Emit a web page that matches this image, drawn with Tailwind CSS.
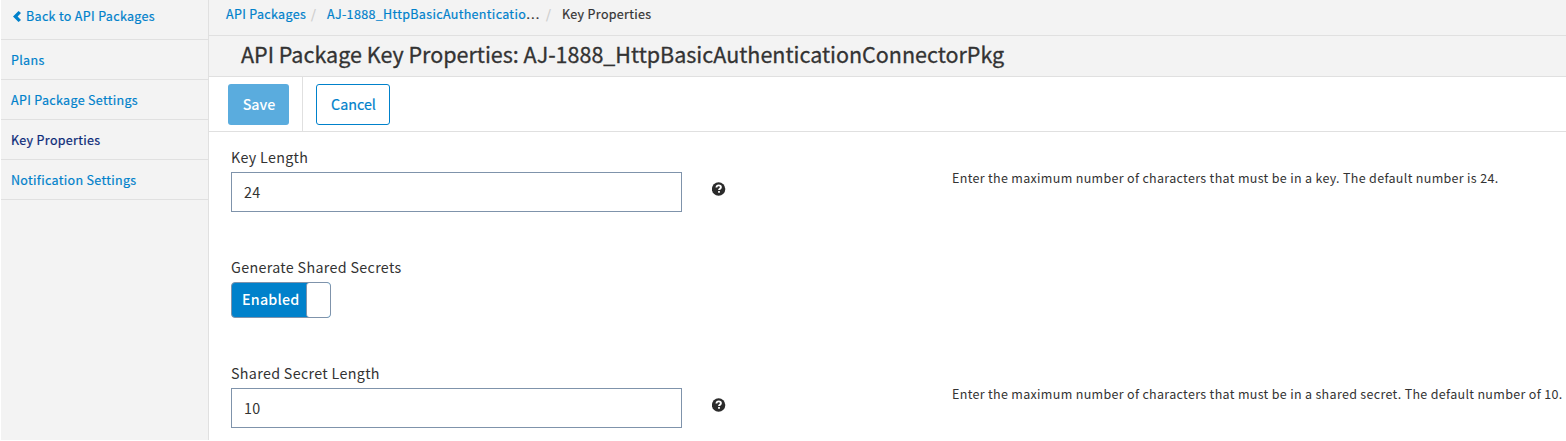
<!DOCTYPE html>
<html lang="en">
<head>
<meta charset="utf-8">
<title>Key Properties</title>
<script src="https://cdn.jsdelivr.net/npm/@tailwindcss/browser@4"></script>
</head>
<body class="h-[441px] overflow-hidden bg-white font-['Noto_Sans_CJK_SC',sans-serif] text-[#333]">
<div class="flex h-[440px] overflow-hidden pl-px">
  <nav class="w-[208px] shrink-0 border-r border-[#e0e0e0] bg-[#f3f3f3] text-[12.5px] tracking-[0.33px] text-[#0081cb] [-webkit-text-stroke:0.2px]">
    <a class="flex h-10 items-center border-b border-[#e0e0e0] pb-[7px] pl-3 leading-5">
      <svg class="mr-[5px] mt-px h-[11px] w-2" viewBox="0 0 8 11"><path d="M5.5 0 8 2.1 4.6 5.5 8 8.9 5.5 11 0 5.5Z" fill="#0081cb"/></svg>
      <span>Back to API Packages</span></a>
    <a class="flex h-10 items-center border-b border-[#e0e0e0] pl-2.5 pt-0.5">Plans</a>
    <a class="flex h-10 items-center border-b border-[#e0e0e0] pl-2.5 pt-0.5">API Package Settings</a>
    <a class="flex h-10 items-center border-b border-[#e0e0e0] pl-2.5 pt-0.5 text-[#0b2a78]">Key Properties</a>
    <a class="flex h-10 items-center border-b border-[#e0e0e0] pl-2.5 pt-0.5">Notification Settings</a>
  </nav>
  <main class="min-w-0 flex-1">
    <div class="flex h-9 items-center whitespace-nowrap border-b border-[#e0e0e0] bg-[#f3f3f3] pb-[6px] pl-[17px] text-[12.5px] tracking-[0.33px] [-webkit-text-stroke:0.2px]">
      <span class="w-[85px] text-[#0081cb]">API Packages</span>
      <span class="w-4 text-[#ccc]">/</span>
      <span class="w-[219px]"><span class="text-[#0081cb]">AJ-1888_HttpBasicAuthenticatio</span>…</span>
      <span class="w-4 text-[#ccc]">/</span>
      <span>Key Properties</span>
    </div>
    <h1 class="flex h-[41px] items-center border-b border-[#e0e0e0] bg-[#f3f3f3] pb-[3px] pl-8 text-[21.5px] [-webkit-text-stroke:0.3px]">API Package Key Properties: AJ-1888_HttpBasicAuthenticationConnectorPkg</h1>
    <div class="flex h-[55px] border-b border-[#e0e0e0] pl-[19px]">
      <div class="w-[75px] border-r border-[#e0e0e0] pt-[7px]"><button class="h-[41px] w-[61px] rounded-[3px] bg-[#5aacde] pb-0.5 pl-px text-[14.3px] font-medium text-white">Save</button></div>
      <div class="pl-[13px] pt-[7px]"><button class="h-[41px] w-[74px] rounded-[3px] border border-[#0081cb] pb-0.5 pl-px text-[14.3px] text-[#0081cb] [-webkit-text-stroke:0.2px]">Cancel</button></div>
    </div>
    <div class="pl-[22px] text-[14.3px] tracking-[0.32px]">
      <div class="flex h-[110px] pt-4">
        <div class="w-[451px] shrink-0">
          <label class="block h-6 leading-[18px]">Key Length</label>
          <div class="flex h-10 items-center border border-[#7f93ab] pl-3">24</div>
        </div>
        <svg class="ml-[30px] mt-[34px] size-[14px] shrink-0" viewBox="0 0 14 14"><circle cx="6.6" cy="7" r="6.7" fill="#2b2b2b"/><path d="M4.4 5.5C4.6 3.9 5.6 3.4 6.7 3.4c1.3 0 2.2.7 2.2 1.8 0 1.4-1.9 1.5-1.9 2.9" fill="none" stroke="#fff" stroke-width="1.9"/><path d="M6.1 9.1h1.8v1.7h-1.8z" fill="#fff"/></svg>
        <p class="ml-[226px] mt-5 whitespace-nowrap text-[12.5px] leading-5">Enter the maximum number of characters that must be in a key. The default number is 24.</p>
      </div>
      <div class="h-[106px] pt-4">
        <div class="h-6 leading-[18px]">Generate Shared Secrets</div>
        <div class="flex h-9 w-[100px] rounded-[4px] border border-[#7f93ab] bg-[#0081cb]">
          <div class="flex w-[74px] items-center pb-0.5 pl-2.5 font-medium tracking-[0.2px] text-white">Enabled</div>
          <div class="flex-1 rounded-[3px] border-l border-[#7f93ab] bg-white"></div>
        </div>
      </div>
      <div class="flex h-[93px] overflow-hidden pt-4">
        <div class="w-[451px] shrink-0">
          <label class="block h-6 leading-[18px]">Shared Secret Length</label>
          <div class="flex h-10 items-center border border-[#7f93ab] pl-3">10</div>
        </div>
        <svg class="ml-[30px] mt-[34px] size-[14px] shrink-0" viewBox="0 0 14 14"><circle cx="6.6" cy="7" r="6.7" fill="#2b2b2b"/><path d="M4.4 5.5C4.6 3.9 5.6 3.4 6.7 3.4c1.3 0 2.2.7 2.2 1.8 0 1.4-1.9 1.5-1.9 2.9" fill="none" stroke="#fff" stroke-width="1.9"/><path d="M6.1 9.1h1.8v1.7h-1.8z" fill="#fff"/></svg>
        <p class="ml-[226px] mt-5 whitespace-nowrap text-[12.5px] leading-5">Enter the maximum number of characters that must be in a shared secret. The default number of 10.</p>
      </div>
    </div>
  </main>
</div>
</body>
</html>
